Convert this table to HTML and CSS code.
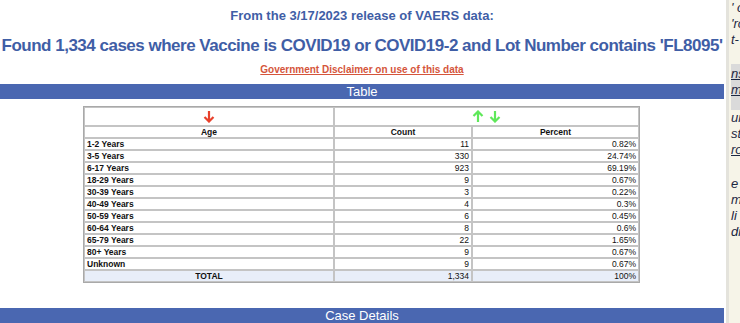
FILE: index.html
```html
<!DOCTYPE html>
<html>
<head>
<meta charset="utf-8">
<link rel="stylesheet" href="styles.css">
</head>
<body>
<div class="page">
  <main class="main">
    <h3 class="release">From the 3/17/2023 release of VAERS data:</h3>
    <h1 class="found">Found 1,334 cases where Vaccine is COVID19 or COVID19-2 and Lot Number contains 'FL8095'</h1>
    <p class="disc"><a href="#">Government Disclaimer on use of this data</a></p>
    <div class="bar">Table</div>
    <table class="data">
      <tr class="arrows">
        <td>
          <svg width="12" height="13" viewBox="0 0 12 13"><path d="M6 1V11M1.5 7L6 11.5L10.5 7" fill="none" stroke="#e8412c" stroke-width="2.2"/></svg>
        </td>
        <td colspan="2">
          <svg width="12" height="13" viewBox="0 0 12 13"><path d="M6 12V2M1.5 6L6 1.5L10.5 6" fill="none" stroke="#5fe85a" stroke-width="2.2"/></svg>
          <svg width="12" height="13" viewBox="0 0 12 13"><path d="M6 1V11M1.5 7L6 11.5L10.5 7" fill="none" stroke="#5fe85a" stroke-width="2.2"/></svg>
        </td>
      </tr>
      <tr class="head"><th class="c-age">Age</th><th class="c-count">Count</th><th class="c-pct">Percent</th></tr>
      <tr><td class="age">1-2 Years</td><td class="num">11</td><td class="num">0.82%</td></tr>
      <tr><td class="age">3-5 Years</td><td class="num">330</td><td class="num">24.74%</td></tr>
      <tr><td class="age">6-17 Years</td><td class="num">923</td><td class="num">69.19%</td></tr>
      <tr><td class="age">18-29 Years</td><td class="num">9</td><td class="num">0.67%</td></tr>
      <tr><td class="age">30-39 Years</td><td class="num">3</td><td class="num">0.22%</td></tr>
      <tr><td class="age">40-49 Years</td><td class="num">4</td><td class="num">0.3%</td></tr>
      <tr><td class="age">50-59 Years</td><td class="num">6</td><td class="num">0.45%</td></tr>
      <tr><td class="age">60-64 Years</td><td class="num">8</td><td class="num">0.6%</td></tr>
      <tr><td class="age">65-79 Years</td><td class="num">22</td><td class="num">1.65%</td></tr>
      <tr><td class="age">80+ Years</td><td class="num">9</td><td class="num">0.67%</td></tr>
      <tr><td class="age">Unknown</td><td class="num">9</td><td class="num">0.67%</td></tr>
      <tr class="total"><td class="tot">TOTAL</td><td class="num">1,334</td><td class="num">100%</td></tr>
    </table>
    <div class="bar bar-bottom">Case Details</div>
  </main>
  <aside class="side">
    <p>' c</p>
    <p>'ro</p>
    <p>t-</p>
    <div class="side-box">
      <p><a href="#">ns</a></p>
      <p><a href="#">m</a></p>
    </div>
    <p>ur</p>
    <p>sta</p>
    <p><a href="#">ro</a></p>
    <p class="gap">e</p>
    <p>m</p>
    <p>li</p>
    <p>di</p>
  </aside>
</div>
</body>
</html>
```
FILE: styles.css
```css
html, body {
  margin: 0;
  padding: 0;
  background: #ffffff;
  overflow: hidden;
}
body {
  font-family: "Liberation Sans", Arial, sans-serif;
}
.page {
  display: flex;
  width: 740px;
  overflow: hidden;
}
.main {
  width: 724px;
  flex: none;
  display: flex;
  flex-direction: column;
  align-items: center;
}
.release {
  margin: 8px 0 0;
  font-size: 13px;
  line-height: 15px;
  font-weight: bold;
  color: #3f5ea6;
}
.found {
  margin: 11px 0 0;
  font-size: 17px;
  line-height: 23px;
  font-weight: bold;
  letter-spacing: -0.5px;
  color: #3f5ea6;
  white-space: nowrap;
}
.disc {
  margin: 7px 0 0;
  font-size: 10px;
  line-height: 12px;
  font-weight: bold;
}
.disc a {
  color: #d5553b;
  text-decoration: underline;
}
.bar {
  align-self: stretch;
  margin-top: 8px;
  height: 15px;
  background: #4a67b1;
  color: #ffffff;
  text-align: center;
  font-size: 13px;
  line-height: 15px;
}
.bar-bottom {
  margin-top: 25px;
}
.data {
  margin-top: 7px;
  margin-left: -1px;
  width: 557px;
  border-collapse: separate;
  border-spacing: 0;
  border: 1px solid #a9a9a9;
  font-size: 8.5px;
}
.data td, .data th {
  border: 1px solid #c4c4c4;
  padding: 0 2px;
  height: 10px;
  line-height: 10px;
  color: #111;
}
.arrows td {
  height: 17px;
  text-align: center;
  vertical-align: middle;
  padding: 0;
}
.arrows svg {
  display: inline-block;
  vertical-align: middle;
  margin: 0 1px;
}
.head th {
  font-weight: bold;
  text-align: center;
}
.c-age { width: 244px; }
.c-count { width: 132px; }
.age {
  font-weight: bold;
  text-align: left;
  padding-left: 1px;
}
.num {
  text-align: right;
  color: #333;
}
.total td {
  background: #e8eef9;
}
.tot {
  text-align: center;
  font-weight: bold;
}
.side {
  flex: none;
  width: 12px;
  margin-left: 2px;
  border-left: 3px solid #e4e3dc;
  background: #f6f4e8;
  height: 323px;
  padding: 0 0 0 2px;
  font-size: 13px;
  font-style: italic;
  color: #1c2742;
  overflow: hidden;
  white-space: nowrap;
}
.side p {
  margin: 0;
  line-height: 16px;
}
.side a {
  color: #1c2742;
  text-decoration: underline;
}
.side-box {
  margin-top: 16px;
  background: #dadada;
  padding: 2px 0 12px;
}
.side .gap {
  margin-top: 18px;
}
```
